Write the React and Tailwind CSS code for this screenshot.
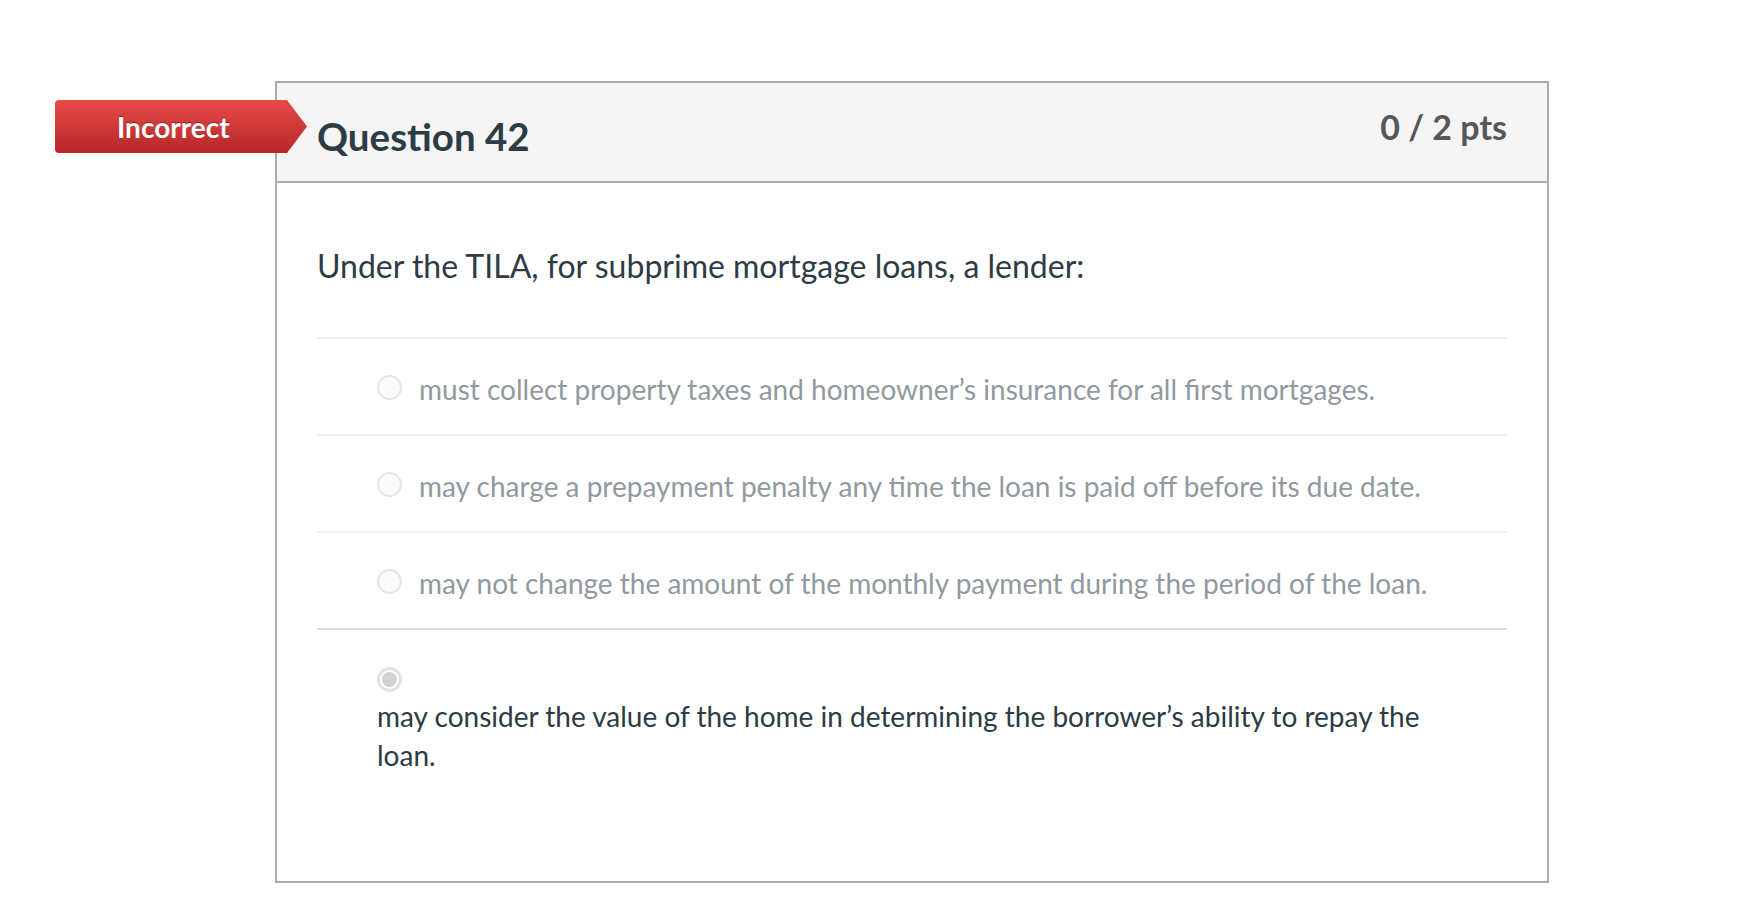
import React from 'react';

const options = [
    "must collect property taxes and homeowner\u2019s insurance for all first mortgages.",
    "may charge a prepayment penalty any time the loan is paid off before its due date.",
    "may not change the amount of the monthly payment during the period of the loan.",
];

function Radio({ checked }) {
    if (checked) {
        return (
            <span className="w-[25px] h-[25px] rounded-full border-[3px] border-[#e2e2e2] bg-white flex items-center justify-center shrink-0">
                <span className="w-[15px] h-[15px] rounded-full bg-[#d2d2d2]" />
            </span>
        );
    }
    return <span className="w-[25px] h-[25px] rounded-full border-2 border-[#e6e6e6] bg-[#fbfbfb] shrink-0" />;
}

export default function App() {
    return (
        <div className="min-h-screen bg-white pt-[81px] pl-[275px] font-['Lato','Liberation_Sans',sans-serif]">
            <div className="relative w-[1274px] h-[802px] border-2 border-[#ababab] bg-white">
                {/* status badge */}
                <div className="absolute left-[-222px] top-[17px] w-[252px] h-[53px] rounded-l-[4px] bg-gradient-to-b from-[#e94949] to-[#b52727] [clip-path:polygon(0_0,232px_0,252px_50%,232px_100%,0_100%)] flex items-center pl-[62px]">
                    <span className="text-white font-bold text-[28px] leading-none [text-shadow:0_-1px_0_rgba(0,0,0,0.35)]">Incorrect</span>
                </div>

                <div className="h-[100px] bg-[#f5f5f5] border-b-2 border-[#ababab] flex justify-between items-start px-[40px]">
                    <h2 className="mt-[30px] text-[38.5px] leading-[1.2] font-bold text-[#2d3b45]">Question 42</h2>
                    <div className="mt-[24px] text-[34px] leading-[1.2] font-bold text-[#575757]">0 / 2 pts</div>
                </div>

                <div className="px-[40px]">
                    <p className="mt-[64px] text-[32px] leading-[1.2] text-[#2d3b45]">
                        Under the TILA, for subprime mortgage loans, a lender:
                    </p>
                    <div className="mt-[52px]">
                        {options.map((text) => (
                            <div key={text} className="h-[97px] border-t-2 border-[#efefef] flex items-center gap-[17px] pl-[60px]">
                                <span className="pt-[2px] flex"><Radio /></span>
                                <span className="pt-[5px] text-[28px] leading-[1.2] text-[#92999f]">{text}</span>
                            </div>
                        ))}
                        <div className="border-t-2 border-[#dcdcdc] pt-[37px] pl-[60px] pr-[60px]">
                            <Radio checked />
                            <div className="mt-[5px] text-[28px] leading-[39px] text-[#2d3b45]">
                                may consider the value of the home in determining the borrower&rsquo;s ability to repay the loan.
                            </div>
                        </div>
                    </div>
                </div>
            </div>
        </div>
    );
}
